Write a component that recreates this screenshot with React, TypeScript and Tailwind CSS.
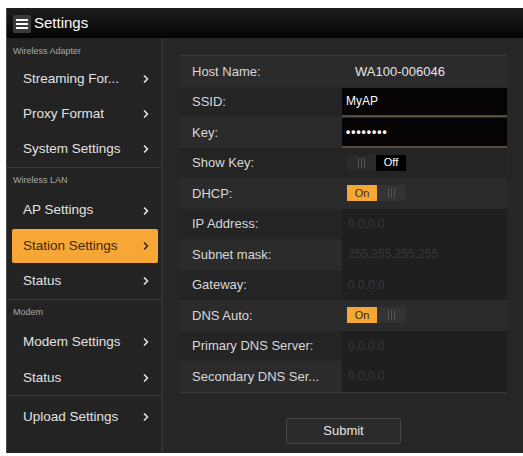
import { ChevronRight } from "lucide-react";

type NavItem = { label: string; active?: boolean };
type NavGroup = { title?: string; items: NavItem[] };

const groups: NavGroup[] = [
    { title: "Wireless Adapter", items: [{ label: "Streaming For..." }, { label: "Proxy Format" }, { label: "System Settings" }] },
    { title: "Wireless LAN", items: [{ label: "AP Settings" }, { label: "Station Settings", active: true }, { label: "Status" }] },
    { title: "Modem", items: [{ label: "Modem Settings" }, { label: "Status" }] },
    { items: [{ label: "Upload Settings" }] },
];

function Grip({ light }: { light?: boolean }) {
    return (
        <div className={`flex-1 h-full flex items-center justify-center gap-[2px] ${light ? "bg-[#333]" : "bg-[#2a2a2a]"}`}>
            <span className="w-px h-[10px] bg-[#555]" />
            <span className="w-px h-[10px] bg-[#555]" />
            <span className="w-px h-[10px] bg-[#555]" />
        </div>
    );
}

function Toggle({ on }: { on: boolean }) {
    return (
        <div className="flex w-[59px] h-[16px] ml-[5px] text-[11px] leading-none">
            {on ? (
                <>
                    <div className="w-[30px] h-full bg-[#f6a735] text-[#3a2a10] flex items-center justify-center">On</div>
                    <Grip light />
                </>
            ) : (
                <>
                    <Grip />
                    <div className="w-[30px] h-full bg-black text-white flex items-center justify-center">Off</div>
                </>
            )}
        </div>
    );
}

function Row({ label, light, children }: { label: string; light?: boolean; children?: React.ReactNode }) {
    return (
        <div className={`flex h-[30.5px] ${light ? "bg-[#2b2b2b]" : "bg-[#242424]"}`}>
            <div className="w-[162px] pl-3 flex items-center text-[13px] text-[#d8d8d8] whitespace-nowrap">{label}</div>
            <div className="flex-1 flex items-center">{children}</div>
        </div>
    );
}

function Faint({ value }: { value: string }) {
    return (
        <div className="h-full w-full bg-[#1f1f1f] flex items-center pl-[6px] text-[12px] text-[#383838]">{value}</div>
    );
}

function Input({ value, bold }: { value: string; bold?: boolean }) {
    return (
        <div className="h-full w-full flex flex-col pt-px">
            <div className={`flex-1 bg-[#050303] flex items-center pl-[4px] text-[12px] text-white ${bold ? "font-bold tracking-[1px]" : ""}`}>
                {value}
            </div>
            <div className="h-[2px] bg-[#5a4b3f]" />
        </div>
    );
}

export default function App() {
    return (
        <div className="w-[523px] h-[456px] bg-white pl-[6px] pt-[8px] pb-[3px] font-['Liberation_Sans',Arial,sans-serif]">
            <div className="h-full flex flex-col bg-[#262626] border-l border-[#4a4a4a]">
                {/* Barra de título */}
                <div className="h-[30px] shrink-0 flex items-center gap-[3px] pl-[6px] pt-[2px] bg-gradient-to-b from-[#1e1e1e] to-[#060606] border-b border-black">
                    <div className="w-[18px] h-[18px] bg-[#3c3c3c] rounded-[2px] flex flex-col items-center justify-center gap-[2px]">
                        <span className="w-[12px] h-[2px] bg-white" />
                        <span className="w-[12px] h-[2px] bg-white" />
                        <span className="w-[12px] h-[2px] bg-white" />
                    </div>
                    <span className="text-[15px] text-white">Settings</span>
                </div>

                <div className="flex flex-1 min-h-0">
                    {/* Menú lateral */}
                    <div className="w-[156px] shrink-0 bg-[#232323] border-r-2 border-[#303030] flex flex-col">
                        {groups.map((g, gi) => (
                            <div key={gi} className={`flex flex-col ${gi < groups.length - 1 ? "border-b border-[#3a3a3a]" : "pt-[3px]"}`}>
                                {g.title && (
                                    <div className={`${gi === 0 ? "h-[23px] pt-[4px]" : "h-[25px]"} flex items-center pl-[6px] text-[9px] text-[#a8a8a8]`}>{g.title}</div>
                                )}
                                {g.items.map(item => (
                                    <div key={item.label} className="h-[35.3px] pl-[5px] pr-[3px] flex items-center">
                                        <div className={`w-full h-[34px] flex items-center justify-between pl-[11px] pr-[6px] rounded-[2px] ${item.active ? "bg-[#f6a735] text-[#3a2a10]" : "text-[#e2e2e2]"}`}>
                                            <span className="text-[13.5px] whitespace-nowrap">{item.label}</span>
                                            <ChevronRight size={12} strokeWidth={3.5} />
                                        </div>
                                    </div>
                                ))}
                            </div>
                        ))}
                    </div>

                    {/* Panel principal */}
                    <div className="flex-1 flex flex-col items-center pt-[17px] pl-[17px] pr-[16px]">
                        <div className="w-full flex flex-col border-t border-b border-[#3a3a3a]">
                            <Row label="Host Name:" light>
                                <span className="pl-[13px] text-[13px] text-[#e6e6e6]">WA100-006046</span>
                            </Row>
                            <Row label="SSID:"><Input value="MyAP" /></Row>
                            <Row label="Key:" light><Input value="••••••••" bold /></Row>
                            <Row label="Show Key:"><Toggle on={false} /></Row>
                            <Row label="DHCP:" light><Toggle on /></Row>
                            <Row label="IP Address:"><Faint value="0.0.0.0" /></Row>
                            <Row label="Subnet mask:" light><Faint value="255.255.255.255" /></Row>
                            <Row label="Gateway:"><Faint value="0.0.0.0" /></Row>
                            <Row label="DNS Auto:" light><Toggle on /></Row>
                            <Row label="Primary DNS Server:"><Faint value="0.0.0.0" /></Row>
                            <Row label="Secondary DNS Ser..." light><Faint value="0.0.0.0" /></Row>
                        </div>
                        <button className="mt-[25px] w-[115px] h-[26px] bg-[#2b2b2b] border border-[#454545] rounded-[2px] text-[13px] text-[#e6e6e6]">
                            Submit
                        </button>
                    </div>
                </div>
            </div>
        </div>
    );
}
